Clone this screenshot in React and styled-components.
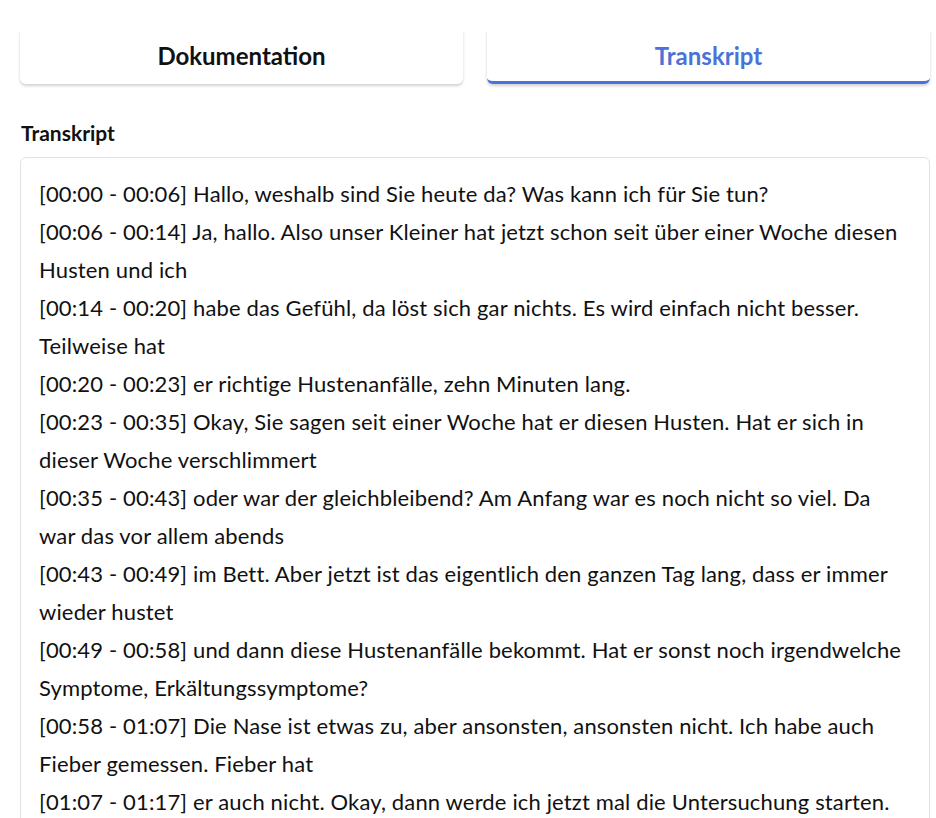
import React, { useState } from "react";
import styled, { createGlobalStyle } from "styled-components";

const Global = createGlobalStyle`
  body { margin: 0; background: #fff; font-family: Lato, "Noto Sans", sans-serif; color: #111; }
`;

const lines = [
  "[00:00 - 00:06] Hallo, weshalb sind Sie heute da? Was kann ich für Sie tun?",
  "[00:06 - 00:14] Ja, hallo. Also unser Kleiner hat jetzt schon seit über einer Woche diesen Husten und ich",
  "[00:14 - 00:20] habe das Gefühl, da löst sich gar nichts. Es wird einfach nicht besser. Teilweise hat",
  "[00:20 - 00:23] er richtige Hustenanfälle, zehn Minuten lang.",
  "[00:23 - 00:35] Okay, Sie sagen seit einer Woche hat er diesen Husten. Hat er sich in dieser Woche verschlimmert",
  "[00:35 - 00:43] oder war der gleichbleibend? Am Anfang war es noch nicht so viel. Da war das vor allem abends",
  "[00:43 - 00:49] im Bett. Aber jetzt ist das eigentlich den ganzen Tag lang, dass er immer wieder hustet",
  "[00:49 - 00:58] und dann diese Hustenanfälle bekommt. Hat er sonst noch irgendwelche Symptome, Erkältungssymptome?",
  "[00:58 - 01:07] Die Nase ist etwas zu, aber ansonsten, ansonsten nicht. Ich habe auch Fieber gemessen. Fieber hat",
  "[01:07 - 01:17] er auch nicht. Okay, dann werde ich jetzt mal die Untersuchung starten.",
];

const Page = styled.div`
  padding: 30px 6px 0 20px;
`;

const Tabs = styled.div`
  display: grid;
  grid-template-columns: 1fr 1fr;
  gap: 24px;
`;

const Tab = styled.button`
  height: 54px;
  border: none;
  border-bottom: 3px solid ${(p) => (p.$active ? "#4a72d9" : "transparent")};
  border-radius: 0 0 6px 6px;
  background: #fff;
  box-shadow: 0 2px 3px rgba(0, 0, 0, 0.18);
  font-family: inherit;
  font-size: 24px;
  font-weight: 700;
  color: ${(p) => (p.$active ? "#4a72d9" : "#111")};
  cursor: pointer;
  padding: 0;
`;

const Label = styled.h3`
  margin: 36px 0 12px 1px;
  font-size: 21px;
  font-weight: 700;
`;

const Box = styled.div`
  border: 1px solid #e2e2e2;
  border-radius: 6px;
  padding: 17px 18px;
  font-size: 22px;
  letter-spacing: 0.15px;
  line-height: 38px;
`;

const Line = styled.div``;

export default function App() {
  const [tab, setTab] = useState("t");
  return (
    <Page>
      <Global />
      <Tabs>
        <Tab $active={tab === "d"} onClick={() => setTab("d")}>Dokumentation</Tab>
        <Tab $active={tab === "t"} onClick={() => setTab("t")}>Transkript</Tab>
      </Tabs>
      <Label>Transkript</Label>
      <Box>
        {lines.map((l) => (
          <Line key={l}>{l}</Line>
        ))}
      </Box>
    </Page>
  );
}
